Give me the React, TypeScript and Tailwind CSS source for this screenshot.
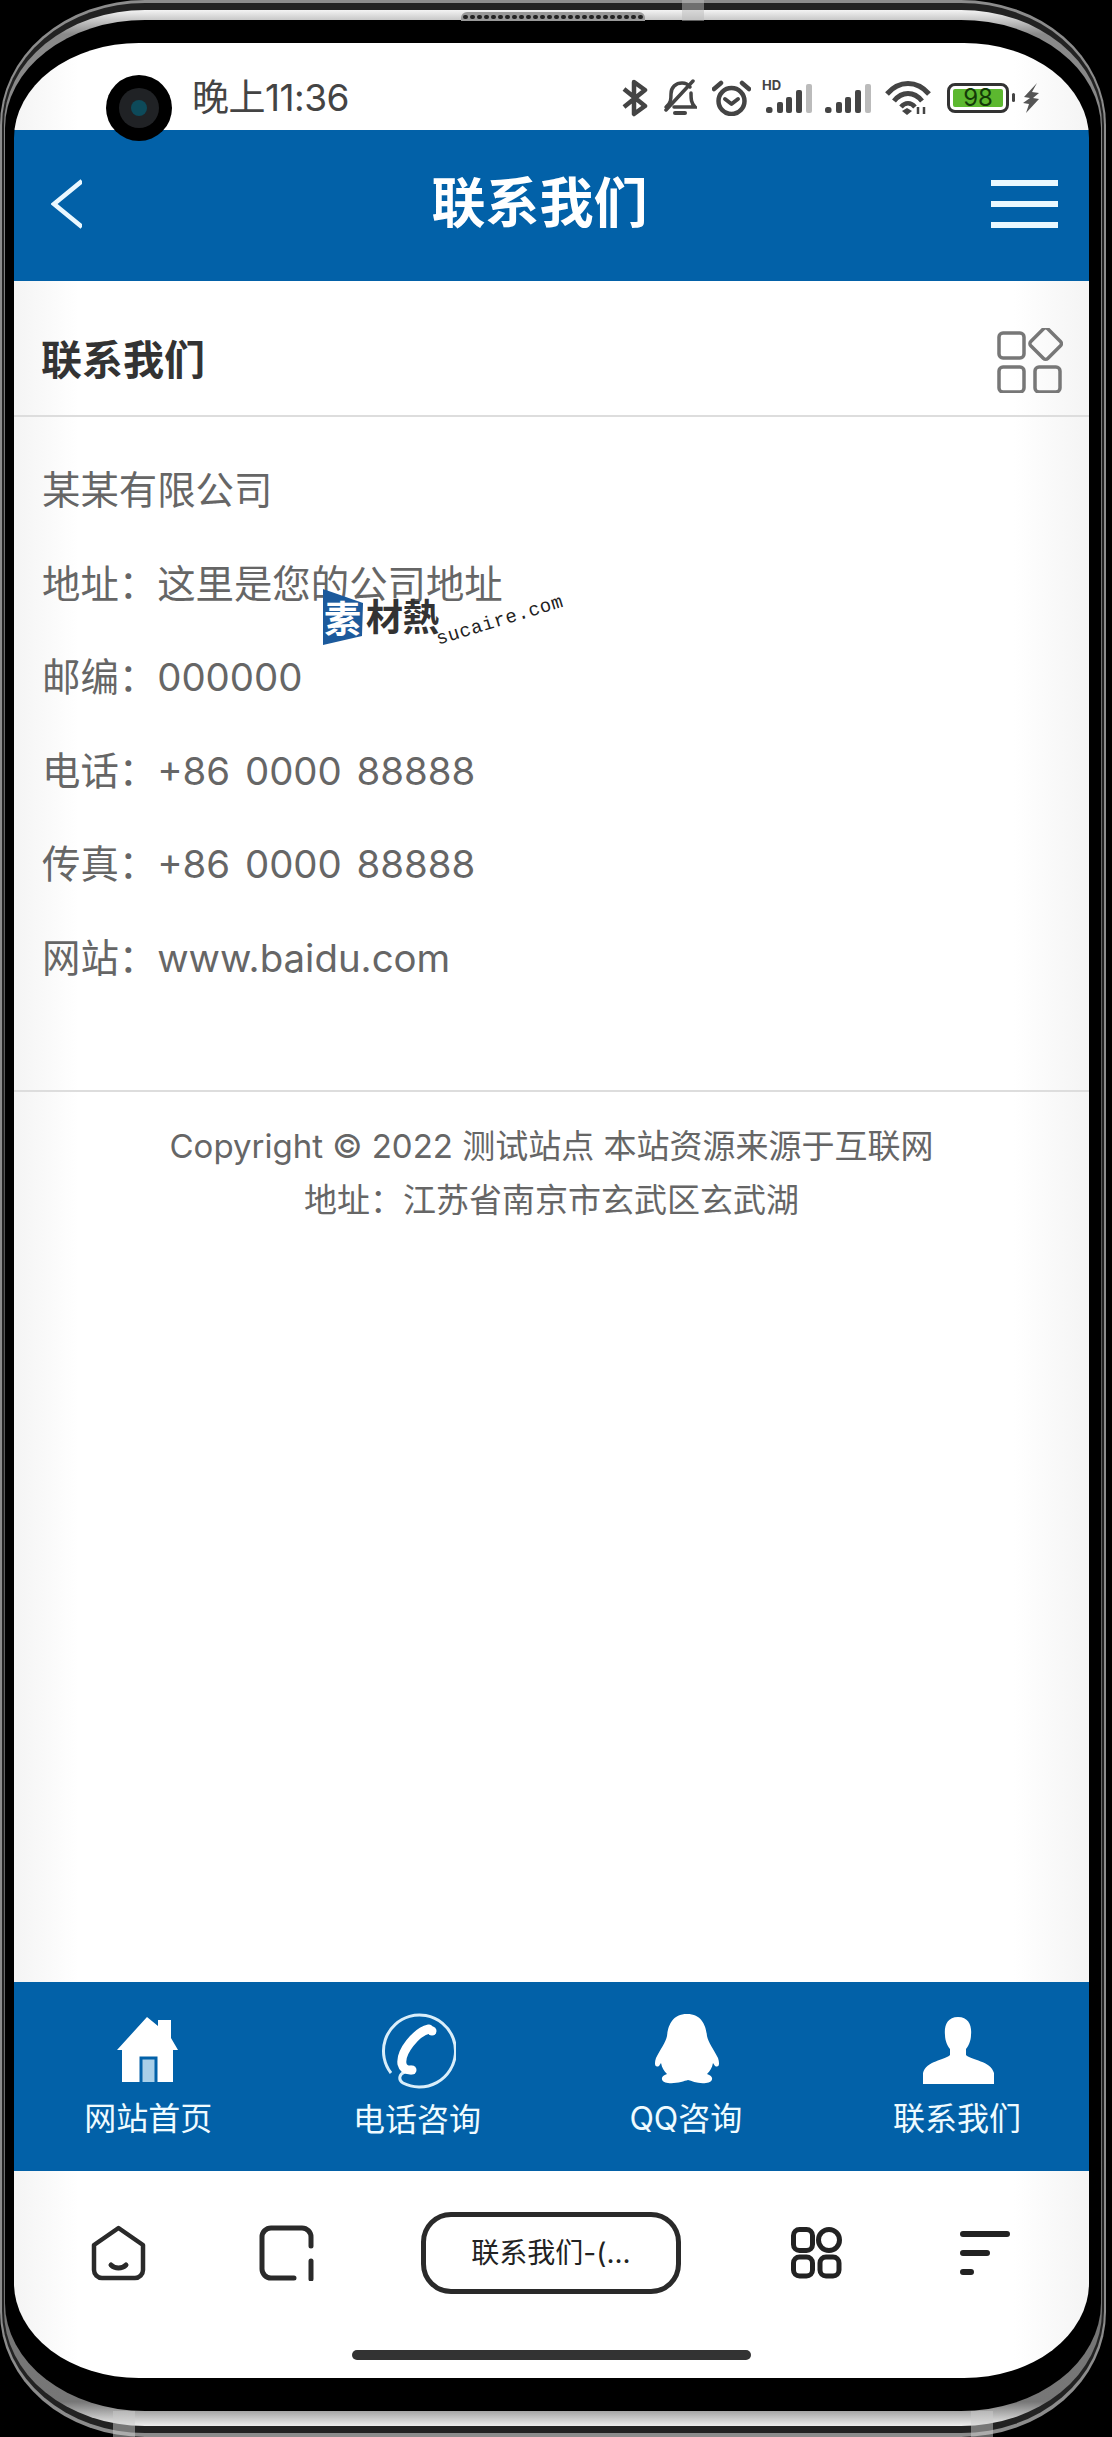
const rows = [
  "某某有限公司",
  "地址：这里是您的公司地址",
  "邮编：000000",
  "电话：+86 0000 88888",
  "传真：+86 0000 88888",
  "网站：www.baidu.com",
];

function Bars() {
  return (
    <svg width="46" height="30" viewBox="0 0 46 30">
      <rect x="0" y="24" width="6.5" height="6" rx="2.5" fill="#444" />
      <rect x="11" y="19" width="6" height="11" rx="2" fill="#444" />
      <rect x="20" y="14" width="6" height="16" rx="2" fill="#444" />
      <rect x="30" y="7" width="6" height="23" rx="2" fill="#444" />
      <rect x="40" y="1" width="6" height="29" rx="2" fill="#bbb" />
    </svg>
  );
}

function StatusBar() {
  return (
    <div className="flex h-[87px] shrink-0 items-center bg-[linear-gradient(90deg,#f4f4f4,#fff_6%,#fff_93%,#f4f4f4)] pt-[22px]">
      <span className="ml-[178px] text-[37px] leading-none tracking-[-0.5px] text-[#444]">晚上11:36</span>
      <div className="ml-auto mr-[49px] flex items-center">
        <svg width="26" height="38" viewBox="0 0 26 38" fill="none" stroke="#444" strokeWidth="4.5" strokeLinejoin="round">
          <path d="M2 10 L23 27 L12 35 V3 L23 11 L2 28" />
        </svg>
        <svg className="ml-[15px]" width="34" height="37" viewBox="0 0 34 37" fill="none" stroke="#444" strokeWidth="3.5" strokeLinecap="round">
          <path d="M3 28 C8 24 8 20 8 15 C8 8 13 4 19 4 C22 4 25 5 27 8" />
          <path d="M28 14 C28 20 28 24 32 28 H11" />
          <path d="M3 31 L30 2" />
          <path d="M12 34 H22" strokeWidth="4" />
        </svg>
        <svg className="ml-[15px]" width="39" height="36" viewBox="0 0 39 36" fill="none" stroke="#444" strokeWidth="4.5" strokeLinecap="round" strokeLinejoin="round">
          <circle cx="19.5" cy="21" r="13" />
          <path d="M13 19 L19.5 24 L26 19" strokeWidth="4" />
          <path d="M2 9 L9 3 M37 9 L30 3" />
        </svg>
        <div className="relative ml-[11px] pl-[4px]">
          <span className="absolute left-0 top-[-4px] text-[13px] font-bold leading-none text-[#444]">HD</span>
          <Bars />
        </div>
        <div className="ml-[13px]">
          <Bars />
        </div>
        <svg className="ml-[14px]" width="46" height="34" viewBox="0 0 46 34" fill="none" stroke="#444" strokeWidth="5">
          <path d="M2 13 C14 -1 32 -1 44 13" />
          <path d="M9 20 C17 10 29 10 37 20" />
          <path d="M16 26 C20 21 26 21 30 26" strokeWidth="4.5" />
          <path d="M22 27 L27 30 L22 34 L17 30 Z" fill="#444" stroke="none" />
          <path d="M33 26 V33 M39 26 V33" strokeWidth="2.5" />
        </svg>
        <div className="ml-[16px] flex h-[30px] w-[62px] items-center justify-center rounded-[8px] border-[3.5px] border-[#333] p-[3px]">
          <span className="flex h-full w-full items-center justify-center rounded-[2px] bg-[#5cb82f] text-[24px] leading-none text-[#143a08]">98</span>
        </div>
        <div className="ml-[3px] h-[9px] w-[3px] rounded-sm bg-[#444]" />
        <svg className="ml-[7px]" width="18" height="30" viewBox="0 0 18 30" fill="#555">
          <path d="M15 0 L2 14 L8 15 L1 20 L7 21 L4 30 L17 16 L11 15 L17 10 L10 9 Z" />
        </svg>
      </div>
    </div>
  );
}

function Header() {
  return (
    <div className="flex h-[151px] shrink-0 items-center justify-between bg-[#0261a8] pb-[4px] pl-[37px] pr-[31px]">
      <svg width="31" height="50" viewBox="0 0 31 50" fill="none" stroke="#eaf8ff" strokeWidth="4.5">
        <path d="M31 2 L3 25 L31 48" />
      </svg>
      <h1 className="ml-[6px] text-[54px] font-bold leading-none text-white">联系我们</h1>
      <div className="flex w-[67px] flex-col gap-[15px]">
        <div className="h-[6px] bg-[#eaf8ff]" />
        <div className="h-[6px] bg-[#eaf8ff]" />
        <div className="h-[6px] bg-[#eaf8ff]" />
      </div>
    </div>
  );
}

function Watermark() {
  return (
    <div className="pointer-events-none absolute left-[309px] top-[308px] h-[60px] w-[250px]">
      <svg className="absolute left-0 top-0" width="40" height="56" viewBox="0 0 40 56">
        <path d="M0 0 L40 14 L39 47 L0 56 Z" fill="#1c5a9c" />
      </svg>
      <span className="absolute left-[1px] top-[12px] text-[37px] font-bold leading-none text-white">素</span>
      <span className="absolute left-[43px] top-[10px] text-[37px] font-bold leading-none tracking-[-0.5px] text-[#333]">材熱</span>
      <span className="absolute left-[114px] top-[42px] origin-left -rotate-[17deg] whitespace-nowrap font-['Liberation_Mono',monospace] text-[19px] leading-none tracking-[0.6px] text-[#222]">
        sucaire.com
      </span>
    </div>
  );
}

function Content() {
  return (
    <div className="relative flex flex-1 flex-col bg-[linear-gradient(90deg,#f4f4f4,#fff_6%,#fff_93%,#f4f4f4)]">
      <div className="flex h-[136px] shrink-0 items-center justify-between border-b-2 border-[#ddd] pl-[27px] pr-[26px] pt-[24px]">
        <h2 className="text-[41px] font-bold leading-none text-[#333]">联系我们</h2>
        <svg width="66" height="65" viewBox="0 0 66 65" fill="none" stroke="#777" strokeWidth="3.5">
          <rect x="2" y="5" width="25" height="25" rx="4" />
          <rect x="37" y="4" width="24" height="24" rx="3" transform="rotate(45 49 16) translate(-0.5 0)" />
          <rect x="2" y="39" width="25" height="25" rx="4" />
          <rect x="38" y="39" width="25" height="25" rx="4" />
        </svg>
      </div>
      <div className="px-[28px] pb-[84px] pt-[27px] text-[38.4px] leading-[93.6px] text-[#666] [word-spacing:4px]">
        {rows.map((row) => (
          <p key={row}>{row}</p>
        ))}
      </div>
      <div className="border-t-2 border-[#ddd] pt-[27px] text-center text-[33px] leading-[54px] text-[#666]">
        <p>Copyright © 2022 测试站点 本站资源来源于互联网</p>
        <p>地址：江苏省南京市玄武区玄武湖</p>
      </div>
      <Watermark />
    </div>
  );
}

function TabBar() {
  return (
    <div className="grid h-[189px] shrink-0 grid-cols-4 bg-[#0261a8] text-[32px] leading-none text-[#effbff]">
      <div className="flex flex-col items-center">
        <svg className="mr-[2px] mt-[35px]" width="61" height="65" viewBox="0 0 61 65" fill="#fff">
          <path d="M30 0 L41 9 V3 H54 V21 L61 33 H56 V65 H5 V33 H0 Z" />
          <path d="M24 65 V41 H39 V65" fill="#a9cfe8" stroke="#0261a8" strokeWidth="3" />
        </svg>
        <span className="mt-[21px]">网站首页</span>
      </div>
      <div className="flex flex-col items-center">
        <svg className="mt-[30px]" width="78" height="78" viewBox="0 0 78 78" fill="none" stroke="#d9eefa" strokeWidth="3">
          <path d="M13 61 A36 36 0 1 1 25 71 C20 68 21 62 27 60" />
          <path d="M51 17 C38 20 22 40 24 52 C25 56 28 58 32 58" stroke="#fff" strokeWidth="9" strokeLinecap="round" />
          <circle cx="54" cy="19" r="4.5" fill="#fff" stroke="none" />
          <circle cx="34" cy="58" r="4.5" fill="#fff" stroke="none" />
        </svg>
        <span className="mt-[14px]">电话咨询</span>
      </div>
      <div className="flex flex-col items-center">
        <svg className="ml-[3px] mt-[32px]" width="67" height="70" viewBox="0 0 67 70" fill="#fff">
          <path d="M33 0 C48 0 52 12 53 22 C54 28 60 36 64 44 C66 50 65 54 61 52 L59 49 C58 54 56 57 53 60 C60 62 60 68 52 69 C44 70 38 67 34 66 C30 67 22 70 14 69 C6 68 6 62 13 60 C10 57 8 54 7 49 L5 52 C1 54 0 50 2 44 C6 36 12 28 13 22 C14 12 18 0 33 0 Z" />
        </svg>
        <span className="mt-[19px]">QQ咨询</span>
      </div>
      <div className="ml-[5px] flex flex-col items-center">
        <svg className="ml-[3px] mt-[35px]" width="71" height="67" viewBox="0 0 71 67" fill="#fff">
          <path d="M35 0 C46 0 49 9 48 18 C48 24 45 30 43 32 L43 38 C48 43 68 44 71 56 V67 H0 V56 C3 44 22 43 27 38 L27 32 C25 30 22 24 22 18 C21 9 24 0 35 0 Z" />
        </svg>
        <span className="mt-[19px]">联系我们</span>
      </div>
    </div>
  );
}

function BrowserBar() {
  return (
    <div className="flex h-[207px] shrink-0 flex-col bg-[linear-gradient(90deg,#f4f4f4,#fff_6%,#fff_93%,#f4f4f4)]">
      <div className="mt-[41px] flex h-[82px] items-center pl-[77px]">
        <svg width="55" height="56" viewBox="0 0 55 56" fill="none" stroke="#2a2a2a" strokeWidth="4.5" strokeLinejoin="round" strokeLinecap="round">
          <path d="M27.5 3 L52 20 V45 A8 8 0 0 1 44 53 H11 A8 8 0 0 1 3 45 V20 Z" />
          <path d="M20 40 C24 44 31 44 35 40" strokeWidth="5" />
        </svg>
        <svg className="ml-[113px]" width="55" height="56" viewBox="0 0 55 56" fill="none" stroke="#2a2a2a" strokeWidth="5" strokeLinecap="round">
          <path d="M35 53 H12 A9 9 0 0 1 3 44 V12 A9 9 0 0 1 12 3 H43 A9 9 0 0 1 52 12 V21" />
          <path d="M52 36 V54" />
        </svg>
        <div className="ml-[107px] flex h-[82px] w-[260px] items-center justify-center rounded-[30px] border-[5px] border-[#2a2a2a] text-[28px] leading-none text-[#222]">
          联系我们-(...
        </div>
        <svg className="ml-[110px]" width="51" height="52" viewBox="0 0 51 52" fill="none" stroke="#222" strokeWidth="5">
          <rect x="2.5" y="2.5" width="19" height="21" rx="6" />
          <circle cx="38" cy="13" r="10.5" />
          <rect x="2.5" y="30" width="19" height="19" rx="6" />
          <rect x="29" y="30" width="19" height="19" rx="6" />
        </svg>
        <svg className="ml-[118px]" width="50" height="44" viewBox="0 0 50 44" stroke="#222" strokeWidth="6" strokeLinecap="round">
          <path d="M3 3 H47 M3 22 H27 M3 41 H11" />
        </svg>
      </div>
      <div className="mx-auto mt-[56px] h-[10px] w-[399px] rounded-full bg-[#333]" />
    </div>
  );
}

export default function App() {
  return (
    <div className="relative h-[2437px] w-[1112px] overflow-hidden bg-black pr-[6px] font-['Inter','Noto_Sans_CJK_SC',sans-serif]">
      <div className="h-full rounded-[145px/125px] bg-[#8c8c8c] px-[2px] pb-[4px] pt-[3px]">
        <div className="h-full rounded-[143px/122px] bg-[#222] px-[2px] pb-[7px] pt-[7px]">
          <div className="h-full rounded-[141px/115px] bg-[linear-gradient(180deg,#f4f4f4,#8a8a8a_1%,#555_50%,#777_99%,#eee)] px-px pb-[15px] pt-[10px]">
            <div className="h-full rounded-[140px/108px] bg-black pb-[33px] pl-[9px] pr-[12px] pt-[23px]">
              <div className="flex h-full flex-col overflow-hidden rounded-[125px/95px]">
                <StatusBar />
                <Header />
                <Content />
                <TabBar />
                <BrowserBar />
              </div>
            </div>
          </div>
        </div>
      </div>

      {/* camera hole */}
      <div className="absolute left-[106px] top-[75px] flex h-[66px] w-[66px] items-center justify-center rounded-full bg-black">
        <div className="flex h-[40px] w-[40px] items-center justify-center rounded-full bg-[#202225]">
          <div className="h-[16px] w-[16px] rounded-full bg-[#0d4a5a]" />
        </div>
      </div>

      {/* speaker grille */}
      <div className="absolute left-[461px] top-[12px] flex h-[9px] w-[184px] items-center justify-center gap-[2px] rounded-t-[6px] bg-[#999]">
        {Array.from({ length: 26 }).map((_, i) => (
          <span key={i} className="h-[4px] w-[5px] rounded-full bg-[#222]" />
        ))}
      </div>

      {/* antenna bands */}
      <div className="absolute left-[682px] top-0 h-[21px] w-[22px] bg-[#bbb]/50" />
      <div className="absolute bottom-0 left-[113px] h-[26px] w-[22px] bg-[#ccc]/50" />
      <div className="absolute bottom-0 left-[971px] h-[26px] w-[22px] bg-[#ccc]/50" />
    </div>
  );
}
